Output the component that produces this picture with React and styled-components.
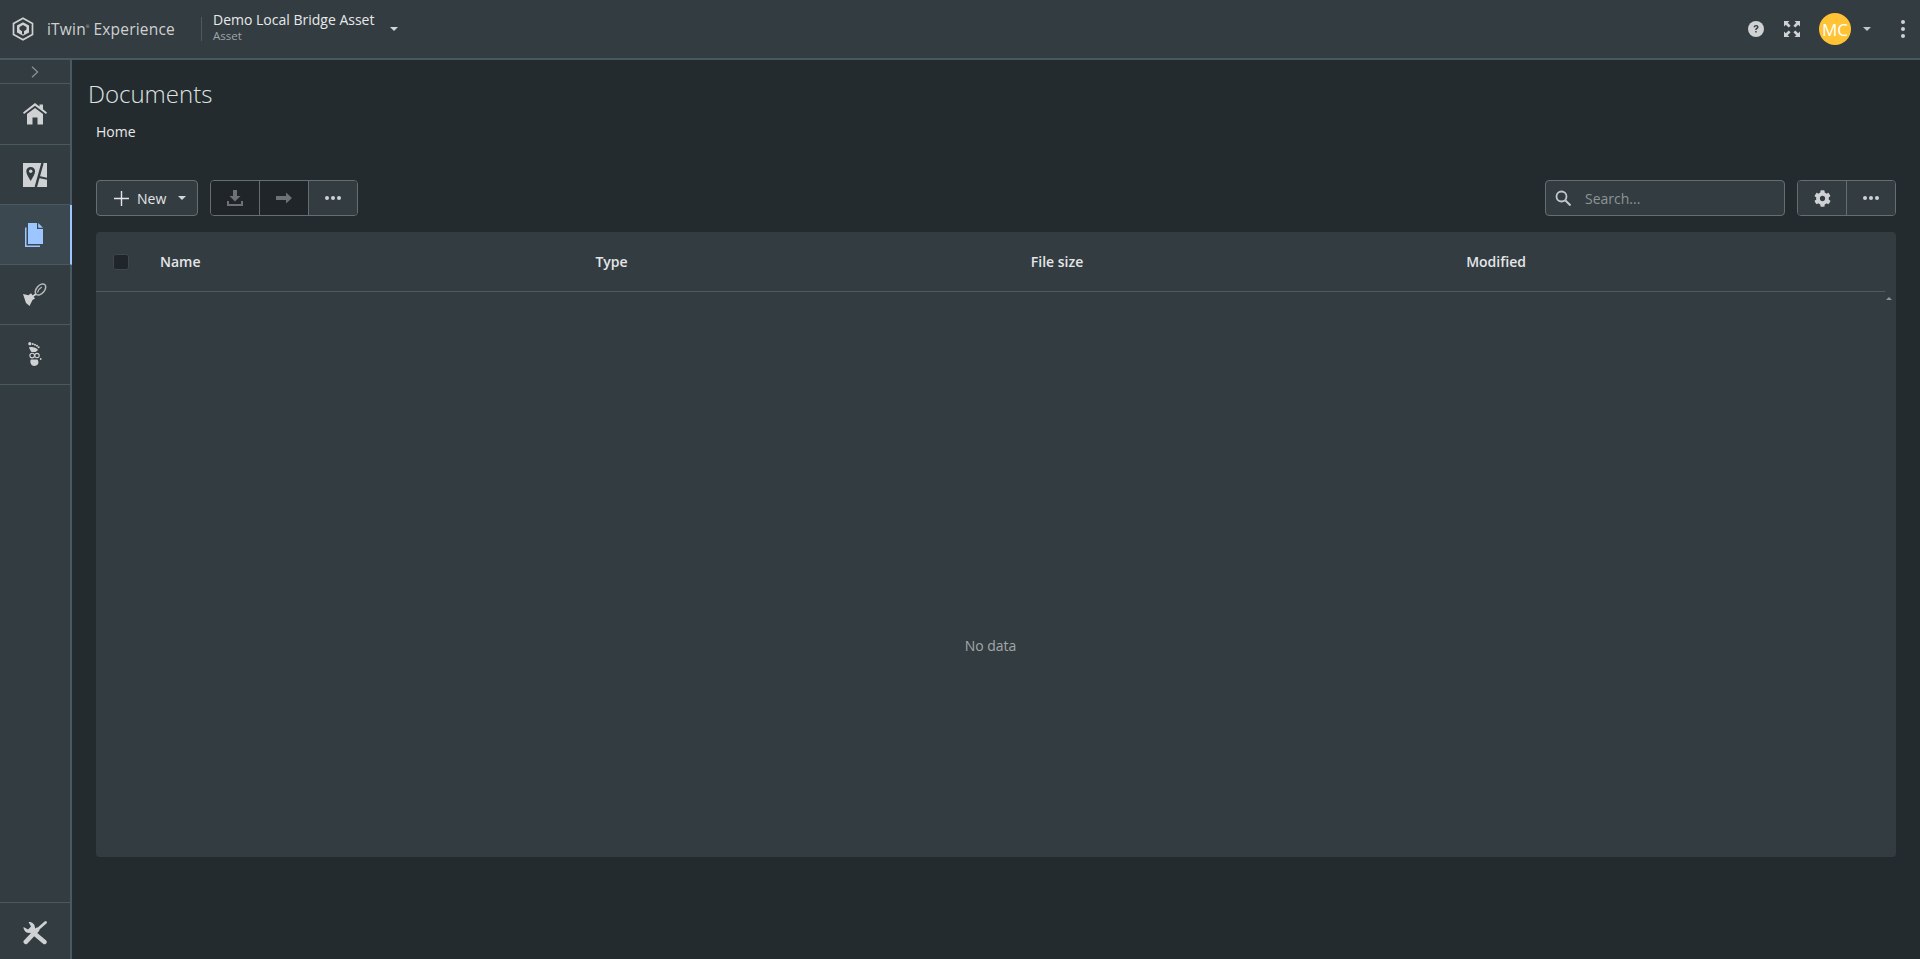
import React from "react";
import styled, { createGlobalStyle } from "styled-components";
import { FaCog } from "react-icons/fa";

const GlobalStyle = createGlobalStyle`
  html, body {
    margin: 0;
    height: 100%;
    background: #242b2e;
    font-family: "Open Sans", "Liberation Sans", sans-serif;
    color: #e4e6e7;
  }
  #root {
    height: 100%;
  }
  * {
    box-sizing: border-box;
  }
`;

const Page = styled.div`
  height: 959px;
  display: flex;
  flex-direction: column;
  overflow: hidden;
`;

/* top bar */

const Header = styled.header`
  height: 60px;
  flex: none;
  display: flex;
  align-items: center;
  background: #333c41;
  border-bottom: 2px solid #495962;
`;

const Brand = styled.div`
  display: flex;
  align-items: center;
  gap: 13px;
  padding-left: 12px;
  width: 201px;
  height: 24px;
  color: #cfd1d2;
`;

const BrandName = styled.span`
  font-size: 15.5px;
  letter-spacing: 0.2px;
  white-space: nowrap;

  sup {
    font-size: 4px;
    vertical-align: 7px;
    margin-right: 4px;
  }
`;

const AssetPicker = styled.div`
  display: flex;
  align-items: center;
  height: 24px;
  border-left: 1px solid #4d5a62;
  padding-left: 11px;
  gap: 16px;
`;

const AssetText = styled.div`
  display: flex;
  flex-direction: column;
`;

const AssetName = styled.span`
  font-size: 14px;
  line-height: 19px;
  margin-top: -5px;
  color: #e8e9ea;
`;

const AssetKind = styled.span`
  font-size: 11.5px;
  line-height: 14px;
  color: #a0a5a8;
`;

const Caret = styled.span`
  width: 0;
  height: 0;
  flex: none;
  border-left: 4px solid transparent;
  border-right: 4px solid transparent;
  border-top: 4px solid ${({ $color }) => $color || "#d4d6d7"};
`;

const HeaderActions = styled.div`
  margin-left: auto;
  display: flex;
  align-items: center;
  color: #cfd1d2;
  padding-right: 15px;
`;

const HeaderIcon = styled.span`
  display: flex;
  width: 16px;
  height: 16px;
  margin-right: ${({ $gap }) => $gap}px;
`;

const Avatar = styled.span`
  width: 32px;
  height: 32px;
  border-radius: 50%;
  background: #ffc335;
  color: #fff;
  font-size: 17px;
  font-weight: 500;
  display: flex;
  align-items: center;
  justify-content: center;
  margin-right: 12px;
`;

const Kebab = styled.span`
  display: flex;
  flex-direction: column;
  gap: 3px;
  margin-left: 30px;

  i {
    display: block;
    width: 4px;
    height: 4px;
    border-radius: 50%;
    background: #cfd1d2;
  }
`;

/* side rail */

const Body = styled.div`
  flex: 1;
  display: flex;
  min-height: 0;
`;

const Sidebar = styled.nav`
  width: 72px;
  flex: none;
  display: flex;
  flex-direction: column;
  background: #333c41;
  border-right: 2px solid #495962;
`;

const Expander = styled.div`
  height: 24px;
  flex: none;
  display: flex;
  align-items: center;
  justify-content: center;
  border-bottom: 1px solid #495962;
  color: #8b9093;
`;

const NavItem = styled.div`
  height: ${({ $h }) => $h || 60}px;
  flex: none;
  display: flex;
  align-items: center;
  justify-content: center;
  padding-bottom: ${({ $lift }) => $lift || 0}px;
  border-bottom: 1px solid #495962;
  color: ${({ $active }) => ($active ? "#9bc6ff" : "#cfd1d2")};
  ${({ $active }) => $active && `
    background: #3b4850;
    margin-right: -2px;
    padding-right: 2px;
    border-right: 2px solid #9bc6ff;
    position: relative;
  `}
`;

const BottomItem = styled(NavItem)`
  margin-top: auto;
  height: 57px;
  border-bottom: 0;
  border-top: 1px solid #495962;
  padding-top: 4px;
`;

/* page content */

const Main = styled.main`
  flex: 1;
  min-width: 0;
  padding: 18px 24px 0 16px;
`;

const Title = styled.h1`
  margin: 0;
  font-size: 24px;
  font-weight: 300;
  line-height: 32px;
  color: #dfe2e3;
`;

const Crumb = styled.div`
  margin: 12px 0 0 8px;
  font-size: 14px;
  line-height: 20px;
  color: #e8e9ea;
`;

const Toolbar = styled.div`
  margin: 38px 0 16px 8px;
  height: 36px;
  display: flex;
  align-items: stretch;
  gap: 12px;
`;

const Button = styled.div`
  display: flex;
  align-items: center;
  background: #333c41;
  border: 1px solid #676e72;
  border-radius: 4px;
  color: #e4e6e7;
  font-size: 14px;
`;

const NewButton = styled(Button)`
  width: 102px;
  padding-left: 17px;
  gap: 8px;

  ${Caret} {
    margin-left: 4px;
  }
`;

const ButtonGroup = styled.div`
  display: flex;
  border: 1px solid #676e72;
  border-radius: 4px;
  overflow: hidden;
`;

const GroupButton = styled.div`
  width: ${({ $w }) => $w || 49}px;
  display: flex;
  align-items: center;
  justify-content: center;
  background: ${({ $disabled }) => ($disabled ? "#1f2528" : "#333c41")};
  color: ${({ $disabled }) => ($disabled ? "#6e7274" : "#cfd1d2")};

  & + & {
    border-left: 1px solid #676e72;
  }
`;

const Dots = styled.span`
  display: flex;
  gap: 2px;

  i {
    display: block;
    width: 4px;
    height: 4px;
    border-radius: 50%;
    background: currentColor;
  }
`;

const SearchBox = styled(Button)`
  width: 240px;
  margin-left: auto;
  padding-left: 9px;
  gap: 14px;
  color: #c4c7c8;
`;

const Placeholder = styled.span`
  color: #8f9497;
  font-size: 14px;
`;

const Card = styled.section`
  margin-left: 8px;
  height: 625px;
  background: #333c41;
  border-radius: 4px;
  display: flex;
  flex-direction: column;
  position: relative;
`;

const TableHead = styled.div`
  height: 60px;
  margin-right: 11px;
  flex: none;
  display: grid;
  grid-template-columns: 64px repeat(4, 435.4px);
  align-items: center;
  border-bottom: 1px solid #4f5a61;
  font-size: 14px;
  font-weight: 600;
  color: #e4e6e7;
`;

const Checkbox = styled.span`
  width: 16px;
  height: 16px;
  margin-left: 17px;
  border-radius: 3px;
  background: #1f2528;
  border: 1px solid #3f474c;
`;

const SortMark = styled.span`
  position: absolute;
  top: 65px;
  right: 4px;
  width: 0;
  height: 0;
  border-left: 3px solid transparent;
  border-right: 3px solid transparent;
  border-bottom: 3px solid #8f9497;
`;

const Empty = styled.div`
  flex: 1;
  display: flex;
  align-items: center;
  justify-content: center;
  padding: 141px 11px 0 0;
  font-size: 14px;
  color: #a3a7a9;
`;

const LogoMark = () => (
  <svg width="22" height="24" viewBox="0 0 22 24" fill="none">
    <path d="M11 1.2 20.500 6.600v10.800L11 22.800 1.500 17.400V6.600z" stroke="currentColor" strokeWidth="1.700" />
    <path d="M11 5.200 17 8.600v6.800l-6 3.400-6-3.400V8.600z" fill="currentColor" />
    <path d="M11 8 14.500 10v2.500L12 14.200v3H10v-3L7.500 12.500V10z" fill="#333c41" />
  </svg>
);

const HelpIcon = () => (
  <svg width="16" height="16" viewBox="0 0 16 16">
    <circle cx="8" cy="8" r="8" fill="currentColor" />
    <path d="M5.600 6.200C5.700 4.800 6.700 4 8.100 4c1.400 0 2.400.8 2.400 2 0 1-.6 1.500-1.200 1.900-.5.3-.7.6-.7 1.200H7.200c0-1 .3-1.500 1-2 .5-.3.8-.6.8-1 0-.5-.4-.8-.9-.8-.6 0-1 .3-1.100.9zM7.200 10h1.400v1.600H7.200z" fill="#333c41" />
  </svg>
);

const FullscreenIcon = () => (
  <svg width="16" height="16" viewBox="0 0 16 16" fill="currentColor">
    <path d="M0 0h5.500L3.700 1.800 6.600 4.700 4.700 6.600 1.800 3.700 0 5.500z" />
    <path d="M16 0v5.500L14.200 3.700 11.300 6.600 9.400 4.700 12.300 1.800 10.500 0z" />
    <path d="M0 16v-5.500L1.800 12.300 4.700 9.400 6.600 11.300 3.700 14.200 5.500 16z" />
    <path d="M16 16h-5.500L12.300 14.200 9.400 11.300 11.300 9.400 14.200 12.300 16 10.500z" />
  </svg>
);

const Chevron = () => (
  <svg width="8" height="12" viewBox="0 0 8 12" fill="none" stroke="currentColor" strokeWidth="1.300">
    <path d="M1 .8 6.600 6 1 11.200" />
  </svg>
);

const HomeIcon = () => (
  <svg width="24" height="22" viewBox="0 0 24 22" fill="currentColor">
    <path d="M12 0 16.500 3.500V1.500H20V6.300L24 9.500 23 11 12 2.800 1 11 0 9.500z" />
    <path d="M12 5 20 11V21.500H14.500V14.500H9.500V21.500H4V11z" />
  </svg>
);

const MapIcon = () => (
  <svg width="24" height="24" viewBox="0 0 24 24">
    <rect width="24" height="24" fill="currentColor" />
    <path d="M19.500 0 12.800 24" stroke="#333c41" strokeWidth="2.400" fill="none" />
    <path d="M16 14 24 15.800" stroke="#333c41" strokeWidth="2" fill="none" />
    <path d="M7.700 4c2.600 0 4.400 1.800 4.400 4.200 0 2.700-2.600 6.400-4.400 9.800C5.900 14.600 3.300 10.900 3.300 8.200 3.300 5.800 5.100 4 7.700 4z" fill="#333c41" />
    <circle cx="7.700" cy="8.300" r="1.700" fill="currentColor" />
  </svg>
);

const DocsIcon = () => (
  <svg width="18" height="24" viewBox="0 0 18 24" fill="currentColor">
    <path d="M3 0h9v6h6v15H3z" />
    <path d="M13.200 0 18 4.800h-4.800z" />
    <path d="M0 4.500h1.500v18h13.500V24H0z" />
  </svg>
);

const TrowelIcon = () => (
  <svg width="24" height="24" viewBox="0 0 24 24" fill="none">
    <path d="M0 11 5.500 12.300 8 10.300 12 15.500l-2.500 1.500L8 20 6.500 23 3 20z" fill="currentColor" />
    <ellipse cx="17.500" cy="6.500" rx="4" ry="6.500" transform="rotate(40 17.500 6.500)" stroke="currentColor" strokeWidth="1.500" opacity="0.85" />
    <path d="M14.500 9.500c.5-2 1.800-4 4.300-5.500" stroke="currentColor" strokeWidth="1.200" opacity="0.85" />
    <path d="M9.500 13.500 13 11" stroke="currentColor" strokeWidth="1.600" />
  </svg>
);

const FootIcon = () => (
  <svg width="14" height="24" viewBox="0 0 14 24" fill="currentColor">
    <ellipse cx="1.800" cy="1.800" rx="1.600" ry="1.800" />
    <circle cx="4.800" cy="2" r="1.100" />
    <circle cx="7" cy="2.800" r="1" />
    <circle cx="9" cy="3.800" r="1" />
    <circle cx="10.600" cy="5.300" r="1" />
    <path d="M1 5.200C3.500 4.400 9 5.500 10 8c-1.200 1-2 1.600-2.500 2H3.500C2.500 8.500 1.500 7 1 5.200z" />
    <path d="M2.800 17.500h6.500c1.300 1 1.500 3.500.4 5-1 1.300-3.600 1.800-5.400 1-1.800-.9-2.500-4-1.500-6z" />
    <circle cx="4.200" cy="13.600" r="2.300" fill="none" stroke="currentColor" strokeWidth="1.100" />
    <circle cx="9" cy="13.600" r="2.200" fill="none" stroke="currentColor" strokeWidth="1.100" />
    <circle cx="12.700" cy="17" r="0.900" />
  </svg>
);

const ToolsIcon = () => (
  <svg width="24" height="24" viewBox="0 0 24 24" fill="none" stroke="currentColor" strokeLinecap="round">
    <path d="M2.800 20.800 14 9" strokeWidth="4.600" />
    <path d="M15 8 22.500 1.500" strokeWidth="2.800" />
    <path d="M9 10.500 21.500 21" strokeWidth="4.400" />
    <path d="M.5 6 5 8.500 8 5.500 5.500 1C9 .5 12 3 12 7L13 8.500 10 12 8 11.500C4 13 .5 10 .5 6z" fill="currentColor" stroke="none" />
  </svg>
);

const DownloadIcon = () => (
  <svg width="16" height="16" viewBox="0 0 16 16" fill="currentColor">
    <path d="M6 0h4v6h3.500L8 11.500 2.500 6H6z" />
    <path d="M0 11h2v3h12v-3h2v5H0z" />
  </svg>
);

const MoveIcon = () => (
  <svg width="16" height="16" viewBox="0 0 16 16" fill="currentColor">
    <path d="M0 6h10V2.500L16 8l-6 5.500V10H0z" />
  </svg>
);

const PlusIcon = () => (
  <svg width="15" height="15" viewBox="0 0 15 15" stroke="currentColor" strokeWidth="1.400">
    <path d="M7.500 0v15M0 7.500h15" />
  </svg>
);

const SearchIcon = () => (
  <svg width="16" height="16" viewBox="0 0 16 16" fill="none" stroke="currentColor">
    <circle cx="6.500" cy="6.500" r="5" strokeWidth="1.800" />
    <path d="M10.200 10.200 15.500 15.500" strokeWidth="2" />
  </svg>
);

const ThreeDots = () => (
  <Dots>
    <i />
    <i />
    <i />
  </Dots>
);

export default function App() {
  return (
    <Page>
      <GlobalStyle />
      <Header>
        <Brand>
          <LogoMark />
          <BrandName>
            iTwin<sup>®</sup>Experience
          </BrandName>
        </Brand>
        <AssetPicker>
          <AssetText>
            <AssetName>Demo Local Bridge Asset</AssetName>
            <AssetKind>Asset</AssetKind>
          </AssetText>
          <Caret />
        </AssetPicker>
        <HeaderActions>
          <HeaderIcon $gap={20}>
            <HelpIcon />
          </HeaderIcon>
          <HeaderIcon $gap={19}>
            <FullscreenIcon />
          </HeaderIcon>
          <Avatar>MC</Avatar>
          <Caret $color="#c4c7c8" />
          <Kebab>
            <i />
            <i />
            <i />
          </Kebab>
        </HeaderActions>
      </Header>
      <Body>
        <Sidebar>
          <Expander>
            <Chevron />
          </Expander>
          <NavItem $h={61}>
            <HomeIcon />
          </NavItem>
          <NavItem>
            <MapIcon />
          </NavItem>
          <NavItem $active>
            <DocsIcon />
          </NavItem>
          <NavItem>
            <TrowelIcon />
          </NavItem>
          <NavItem $lift={2}>
            <FootIcon />
          </NavItem>
          <BottomItem>
            <ToolsIcon />
          </BottomItem>
        </Sidebar>
        <Main>
          <Title>Documents</Title>
          <Crumb>Home</Crumb>
          <Toolbar>
            <NewButton>
              <PlusIcon />
              New
              <Caret />
            </NewButton>
            <ButtonGroup>
              <GroupButton $disabled $w={48}>
                <DownloadIcon />
              </GroupButton>
              <GroupButton $disabled>
                <MoveIcon />
              </GroupButton>
              <GroupButton>
                <ThreeDots />
              </GroupButton>
            </ButtonGroup>
            <SearchBox>
              <SearchIcon />
              <Placeholder>Search...</Placeholder>
            </SearchBox>
            <ButtonGroup>
              <GroupButton $w={48}>
                <FaCog size={17} />
              </GroupButton>
              <GroupButton>
                <ThreeDots />
              </GroupButton>
            </ButtonGroup>
          </Toolbar>
          <Card>
            <TableHead>
              <Checkbox />
              <span>Name</span>
              <span>Type</span>
              <span>File size</span>
              <span>Modified</span>
            </TableHead>
            <SortMark />
            <Empty>No data</Empty>
          </Card>
        </Main>
      </Body>
    </Page>
  );
}
